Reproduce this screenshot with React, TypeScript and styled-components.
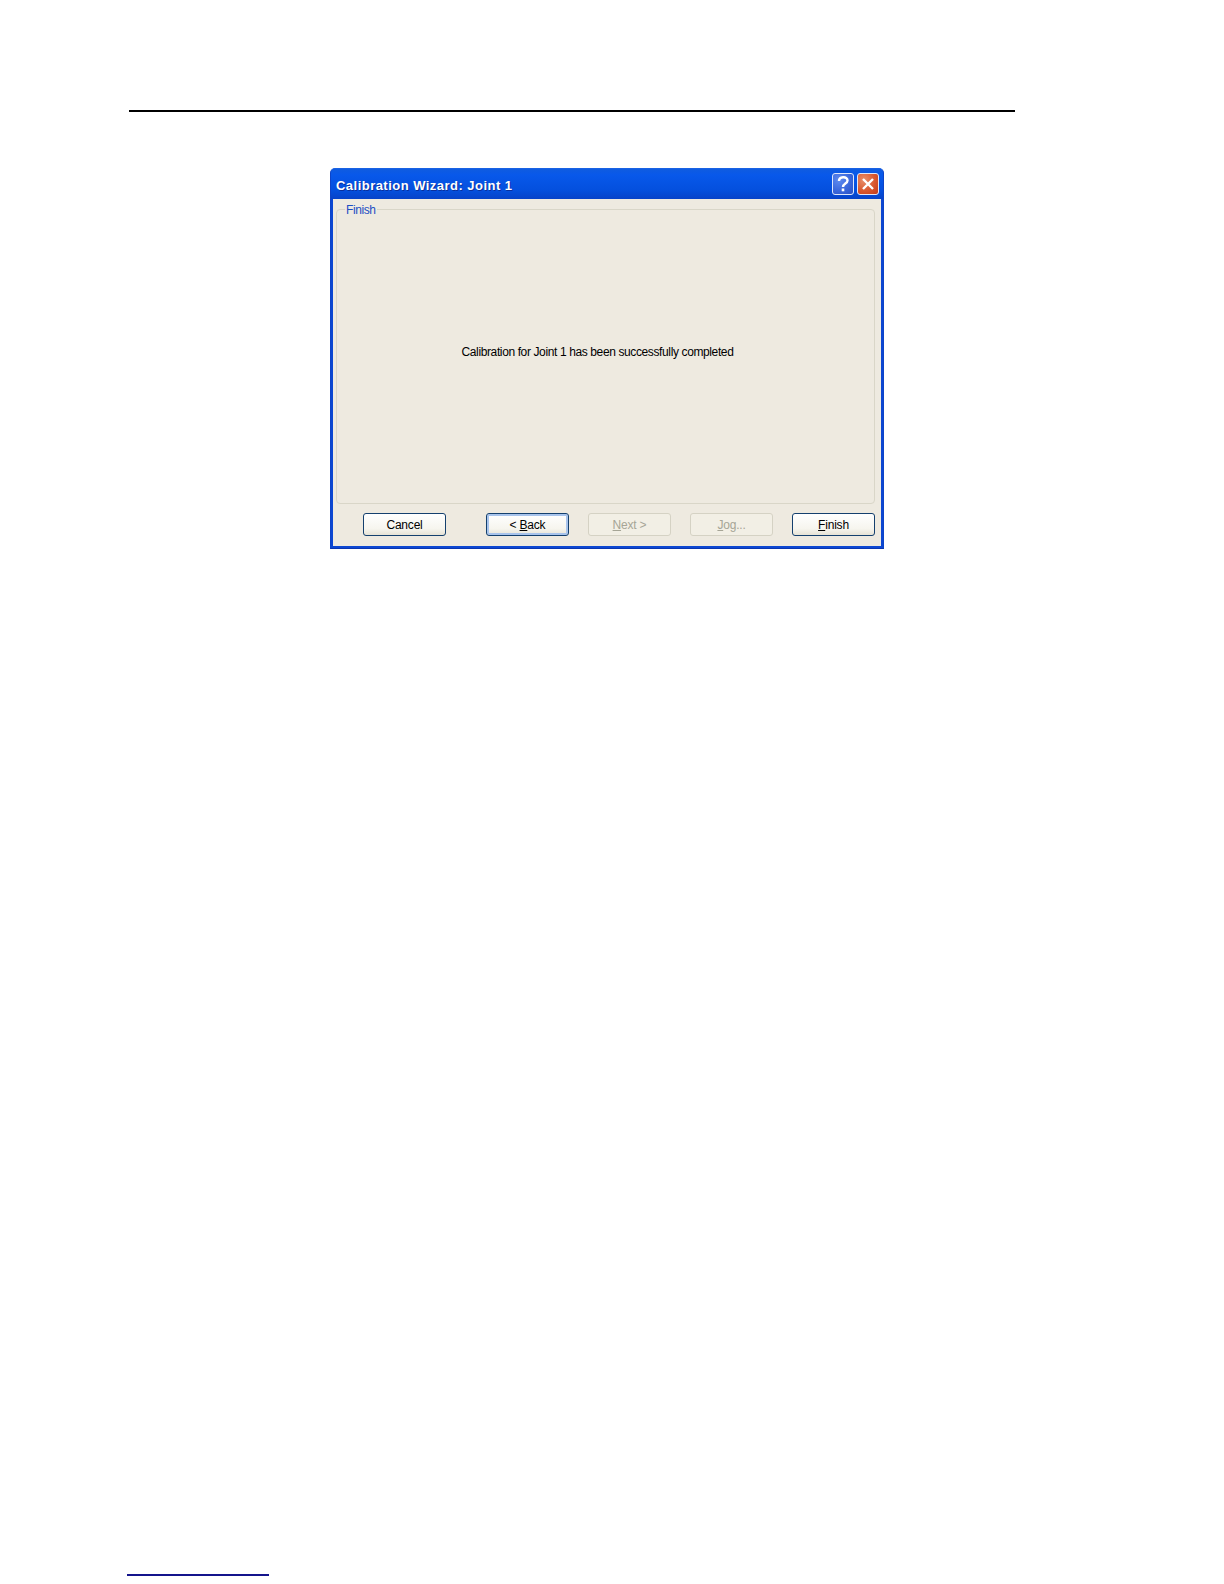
import React from 'react';
import styled, { createGlobalStyle } from 'styled-components';

const GlobalStyle = createGlobalStyle`
  html, body {
    margin: 0;
    padding: 0;
    background: #ffffff;
  }
`;

const Page = styled.div`
  width: 1224px;
  height: 1584px;
  box-sizing: border-box;
  padding: 110px 0 0 129px;
  display: flex;
  flex-direction: column;
  font-family: 'Liberation Sans', Arial, sans-serif;
`;

const HeaderRule = styled.div`
  width: 886px;
  height: 2px;
  flex: none;
  background: #000000;
`;

const DialogWindow = styled.div`
  width: 554px;
  height: 381px;
  flex: none;
  box-sizing: border-box;
  margin: 56px 0 0 201px;
  display: flex;
  flex-direction: column;
  background: #0c47d2;
  border: 1px solid #0d44c8;
  border-top-color: #1a62e4;
  border-bottom-color: #0a36b0;
  border-radius: 5px 5px 0 0;
`;

const TitleBar = styled.div`
  height: 30px;
  flex: none;
  box-sizing: border-box;
  display: flex;
  align-items: center;
  justify-content: space-between;
  padding: 0 4px 1px 5px;
  background: linear-gradient(180deg, #0f5ce0 0%, #0858ea 20%, #0450de 70%, #0743c8 100%);
  border-radius: 4px 4px 0 0;
`;

const TitleText = styled.span`
  padding-top: 3px;
  color: #ffffff;
  font-size: 13px;
  font-weight: 700;
  letter-spacing: 0.47px;
  text-shadow: 1px 1px 0 #0a2f9c;
`;

const TitleButtons = styled.div`
  display: flex;
  gap: 3px;
`;

const CaptionButton = styled.div<{ $close?: boolean }>`
  width: 22px;
  height: 22px;
  box-sizing: border-box;
  border: 1px solid #dfe7fa;
  border-radius: 3px;
  display: flex;
  align-items: center;
  justify-content: center;
  background: ${p => p.$close
    ? 'radial-gradient(circle at 30% 30%, #e8906c 0%, #d9582f 55%, #c23a1a 100%)'
    : 'radial-gradient(circle at 30% 30%, #5f8cf0 0%, #3a68dc 55%, #2a50c4 100%)'};
`;

const ClientArea = styled.div`
  flex: 1;
  min-height: 0;
  margin: 0 2px 2px;
  padding: 10px 6px 10px 3px;
  display: flex;
  flex-direction: column;
  background: #eeeae0;
`;

const GroupBox = styled.div`
  flex: 1;
  min-height: 0;
  position: relative;
  display: flex;
  align-items: center;
  justify-content: center;
  border: 1px solid #d9d6c8;
  border-radius: 4px;
`;

const GroupLegend = styled.span`
  position: absolute;
  top: -7px;
  left: 8px;
  padding: 0 1px;
  background: #eeeae0;
  color: #1c4fc4;
  font-size: 12px;
  letter-spacing: -0.4px;
  line-height: 14px;
`;

const Message = styled.div`
  padding: 0 16px 9px 0;
  color: #000000;
  font-size: 12px;
  letter-spacing: -0.38px;
`;

const ButtonRow = styled.div`
  height: 23px;
  flex: none;
  margin-top: 9px;
  display: flex;
  padding-left: 27px;
`;

const WizardButton = styled.div<{ $default?: boolean; $disabled?: boolean; $gap: number }>`
  width: 83px;
  height: 23px;
  box-sizing: border-box;
  margin-left: ${p => p.$gap}px;
  display: flex;
  align-items: center;
  justify-content: center;
  border: 1px solid ${p => (p.$disabled ? '#d5d2c4' : '#14406e')};
  border-radius: 3px;
  font-size: 12px;
  letter-spacing: -0.2px;
  color: ${p => (p.$disabled ? '#a6a596' : '#000000')};
  background: ${p => (p.$disabled
    ? '#f2efe5'
    : 'linear-gradient(180deg, #ffffff 0%, #f6f5ee 70%, #e6e3d6 100%)')};
  box-shadow: ${p => (p.$default ? 'inset 0 0 0 2px #a8c4ec' : 'none')};

  u {
    text-underline-offset: 1px;
  }
`;

const FootnoteRule = styled.div`
  width: 142px;
  height: 2px;
  flex: none;
  margin: 1025px 0 0 -2px;
  background: #14148c;
`;

function App() {
  return (
    <Page>
      <GlobalStyle />
      <HeaderRule />
      <DialogWindow>
        <TitleBar>
          <TitleText>Calibration Wizard: Joint 1</TitleText>
          <TitleButtons>
            <CaptionButton>
              <svg width="14" height="16" viewBox="0 0 14 16">
                <path d="M3 5c0-5 8.500-5 8.500-.5 0 3-4.500 3-4.500 6.500" fill="none" stroke="#fff" strokeWidth="2.400" />
                <rect x="5.700" y="12.500" width="2.600" height="2.800" fill="#fff" />
              </svg>
            </CaptionButton>
            <CaptionButton $close>
              <svg width="14" height="14" viewBox="0 0 14 14">
                <path d="M2 2l10 10M12 2L2 12" fill="none" stroke="#fff" strokeWidth="2.400" />
              </svg>
            </CaptionButton>
          </TitleButtons>
        </TitleBar>
        <ClientArea>
          <GroupBox>
            <GroupLegend>Finish</GroupLegend>
            <Message>Calibration for Joint 1 has been successfully completed</Message>
          </GroupBox>
          <ButtonRow>
            <WizardButton $gap={0}>Cancel</WizardButton>
            <WizardButton $gap={40} $default>&lt;&nbsp;<u>B</u>ack</WizardButton>
            <WizardButton $gap={19} $disabled><span><u>N</u>ext &gt;</span></WizardButton>
            <WizardButton $gap={19} $disabled><span><u>J</u>og...</span></WizardButton>
            <WizardButton $gap={19}><span><u>F</u>inish</span></WizardButton>
          </ButtonRow>
        </ClientArea>
      </DialogWindow>
      <FootnoteRule />
    </Page>
  );
}

export default App;
